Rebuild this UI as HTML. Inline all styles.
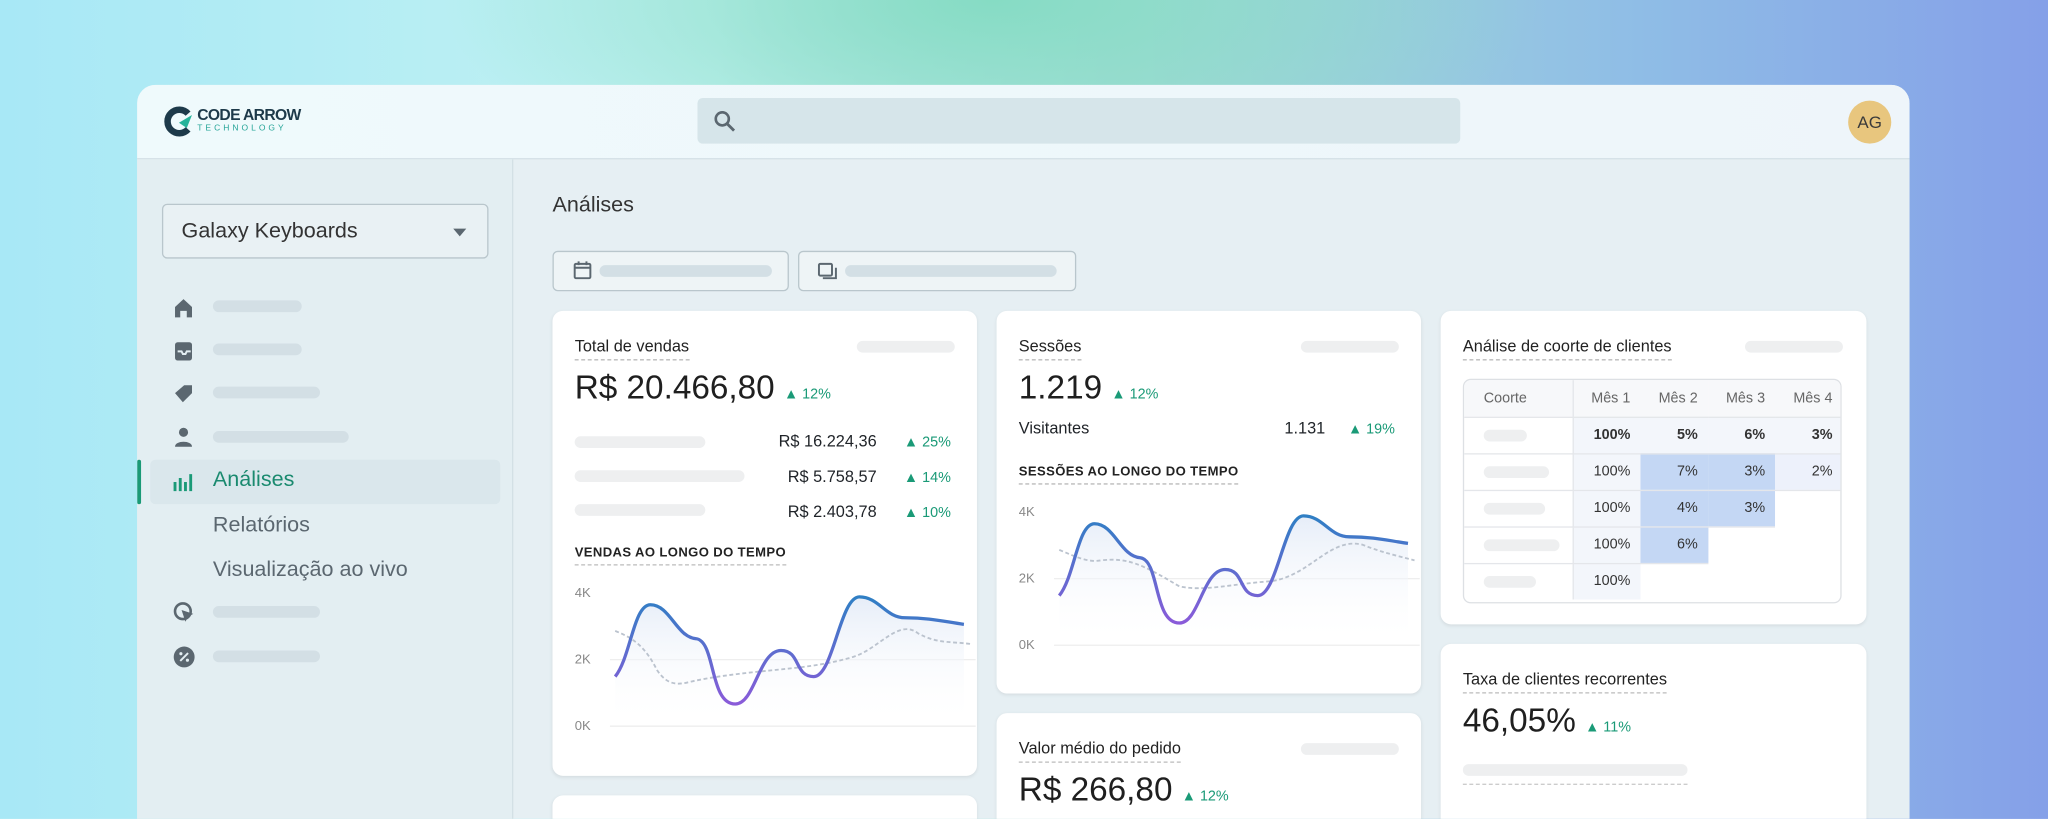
<!DOCTYPE html>
<html><head><meta charset="utf-8"><style>
*{box-sizing:border-box;margin:0;padding:0}
html,body{width:2048px;height:819px;overflow:hidden}
body{font-family:"Liberation Sans",sans-serif;color:#1f2328}
#w{width:1568px;height:627px;transform:scale(1.30612);transform-origin:0 0;position:relative;overflow:hidden;
background:radial-gradient(ellipse 420px 160px at 760px 0,#86dcc4 0%,rgba(134,220,196,0) 100%),linear-gradient(90deg,#a8e8f6 0%,#c2f2f1 35%,#a6dcd8 55%,#8fbde6 80%,#85a0e8 100%)}
.win{position:absolute;left:105px;top:65px;width:1357px;height:562px;border-radius:14px 14px 0 0;overflow:hidden;background:#e6eff3}
.hdr{position:absolute;left:0;top:0;right:0;height:57px;background:linear-gradient(90deg,#effafc,#eef5fa);border-bottom:1px solid #d5e2e7}
.side{position:absolute;left:0;top:57px;width:288px;bottom:0;background:#e3eef2;border-right:1px solid #d3e0e5}
.abs{position:absolute}
.bar{position:absolute;height:9px;border-radius:5px;background:#d3dfe5}
.card{position:absolute;background:#fff;border-radius:8px;box-shadow:0 1px 3px rgba(0,0,0,.08)}
.t{position:absolute;font-size:12.5px;color:#222;border-bottom:1px dashed #bbb;padding-bottom:3px}
.g{color:#1a9a77;font-size:11px}
.gb{position:absolute;height:9px;border-radius:5px;background:#eeeff0}
.big{position:absolute;font-size:25.5px;color:#1f1f1f}
.lab{position:absolute;font-size:10px;color:#888}
table{border-collapse:collapse;font-size:11px}
td{height:28px;text-align:right;padding-right:8px;color:#333;border-bottom:1px solid #e4e6ea}
td:first-child{padding-left:15px;text-align:left}
</style></head><body><div id="w">
<div class="win">
<div class="hdr">
 <svg class="abs" style="left:20px;top:16px" width="24" height="24" viewBox="0 0 24 24"><path d="M19 6A9 9 0 1 0 19 18" fill="none" stroke="#1d3a4a" stroke-width="5"/><path d="M12 13l10-6-4 10z" fill="#26b39a"/></svg>
 <div class="abs" style="left:46px;top:16px;font-size:12px;font-weight:bold;color:#1d3a4a;letter-spacing:-.5px">CODE ARROW</div>
 <div class="abs" style="left:46px;top:30px;font-size:6.5px;color:#26a598;letter-spacing:2.3px">TECHNOLOGY</div>
 <div class="abs" style="left:429px;top:10px;width:584px;height:35px;border-radius:4px;background:#d6e5ea"></div>
 <svg class="abs" style="left:441px;top:19px" width="18" height="18" viewBox="0 0 18 18"><circle cx="7" cy="7" r="5" fill="none" stroke="#5b6770" stroke-width="2"/><path d="M11 11l5 5" stroke="#5b6770" stroke-width="2.2"/></svg>
 <div class="abs" style="left:1310px;top:12px;width:33px;height:33px;border-radius:50%;background:#e8c67e;font-size:13px;color:#3b3b3b;text-align:center;line-height:33px">AG</div>
</div>
<div class="side">
 <div class="abs" style="left:19px;top:34px;width:250px;height:42px;border:1px solid #b9c6cc;border-radius:4px;background:#e9f1f4;font-size:16.5px;color:#333;padding:11px 14px">Galaxy Keyboards</div>
 <div class="abs" style="left:242px;top:53px;border-left:5px solid transparent;border-right:5px solid transparent;border-top:6px solid #5b6770"></div>
 <svg class="abs" style="left:27px;top:105px" width="17" height="17"><path d="M2 8L8.5 2 15 8v8h-4v-5H6v5H2z" fill="#5b6770"/></svg>
 <div class="bar" style="left:58px;top:108px;width:68px"></div>
 <svg class="abs" style="left:27px;top:138px" width="17" height="17"><rect x="2" y="2" width="13" height="14" rx="2" fill="#5b6770"/><path d="M4 9h3l1 2h2l1-2h3" stroke="#e3eef2" stroke-width="1.5" fill="none"/></svg>
 <div class="bar" style="left:58px;top:141px;width:68px"></div>
 <svg class="abs" style="left:27px;top:171px" width="17" height="17"><path d="M2 8l7-6h6v6l-7 7z" fill="#5b6770"/></svg>
 <div class="bar" style="left:58px;top:174px;width:82px"></div>
 <svg class="abs" style="left:27px;top:204px" width="17" height="17"><circle cx="8.5" cy="5" r="3.5" fill="#5b6770"/><path d="M2 16c0-5 13-5 13 0z" fill="#5b6770"/></svg>
 <div class="bar" style="left:58px;top:208px;width:104px"></div>
 <div class="abs" style="left:10px;top:230px;width:268px;height:34px;border-radius:4px;background:#dae7ec"></div>
 <div class="abs" style="left:0;top:230px;width:3px;height:34px;background:#1a9a77;border-radius:2px"></div>
 <svg class="abs" style="left:27px;top:238px" width="18" height="18"><path d="M2 9v7M6 6v10M10 9v7M14 3v13" stroke="#1a9a77" stroke-width="2.2"/></svg>
 <div class="abs" style="left:58px;top:236px;font-size:16.5px;color:#1a8a6f">Análises</div>
 <div class="abs" style="left:58px;top:271px;font-size:16.5px;color:#5b6770">Relatórios</div>
 <div class="abs" style="left:58px;top:305px;font-size:16.5px;color:#5b6770">Visualização ao vivo</div>
 <svg class="abs" style="left:27px;top:338px" width="18" height="18"><circle cx="8" cy="8" r="6" fill="none" stroke="#5b6770" stroke-width="2"/><path d="M7 7l9 3-4 2-2 4z" fill="#5b6770"/></svg>
 <div class="bar" style="left:58px;top:342px;width:82px"></div>
 <svg class="abs" style="left:27px;top:372px" width="18" height="18"><circle cx="9" cy="9" r="8" fill="#5b6770"/><path d="M6 12l6-6" stroke="#e3eef2" stroke-width="1.5"/><circle cx="6.5" cy="6.5" r="1.2" fill="#e3eef2"/><circle cx="11.5" cy="11.5" r="1.2" fill="#e3eef2"/></svg>
 <div class="bar" style="left:58px;top:376px;width:82px"></div>
</div>
<div class="abs" style="left:318px;top:83px;font-size:16.5px;color:#333">Análises</div>
<div class="abs" style="left:318px;top:127px;width:181px;height:31px;border:1px solid #b9c6cc;border-radius:4px;background:#eef4f6"></div>
<svg class="abs" style="left:334px;top:135px" width="14" height="14"><rect x="1" y="2" width="12" height="11" rx="1" fill="none" stroke="#5b6770" stroke-width="1.5"/><path d="M1 5h12M4 0v3M10 0v3" stroke="#5b6770" stroke-width="1.5"/></svg>
<div class="bar" style="left:354px;top:138px;width:132px"></div>
<div class="abs" style="left:506px;top:127px;width:213px;height:31px;border:1px solid #b9c6cc;border-radius:4px;background:#eef4f6"></div>
<svg class="abs" style="left:521px;top:135px" width="15" height="14"><rect x="1" y="2" width="10" height="9" rx="1" fill="none" stroke="#5b6770" stroke-width="1.5"/><path d="M4 13h10V5" stroke="#5b6770" stroke-width="1.5" fill="none"/></svg>
<div class="bar" style="left:542px;top:138px;width:162px"></div>

<svg width="0" height="0" style="position:absolute"><defs>
<linearGradient id="a" gradientUnits="userSpaceOnUse" x1="0" y1="14" x2="0" y2="96"><stop offset="0" stop-color="#2f7fc4"/><stop offset="1" stop-color="#8a5bd9"/></linearGradient>
<linearGradient id="f" x1="0" y1="0" x2="0" y2="1"><stop offset="0" stop-color="#e6edf8"/><stop offset="1" stop-color="#fff" stop-opacity="0"/></linearGradient></defs></svg>

<!-- card1 -->
<div class="card" style="left:318px;top:173px;width:325px;height:356px">
 <div class="t" style="left:17px;top:20px">Total de vendas</div>
 <div class="gb" style="left:233px;top:23px;width:75px"></div>
 <div class="big" style="left:17px;top:45px">R$ 20.466,80 <span class="g">▲ 12%</span></div>
 <div class="gb" style="left:17px;top:96px;width:100px"></div>
 <div class="gb" style="left:17px;top:122px;width:130px"></div>
 <div class="gb" style="left:17px;top:148px;width:100px"></div>
 <div class="abs" style="right:20px;top:87px;font-size:12.5px;text-align:right;line-height:26px">R$ 16.224,36 &nbsp;&nbsp;&nbsp;&nbsp;&nbsp;<span class="g">▲ 25%</span><br>R$ 5.758,57 &nbsp;&nbsp;&nbsp;&nbsp;&nbsp;<span class="g">▲ 14%</span><br>R$ 2.403,78 &nbsp;&nbsp;&nbsp;&nbsp;&nbsp;<span class="g">▲ 10%</span></div>
 <div class="t" style="left:17px;top:180px;font-size:10px;font-weight:bold;letter-spacing:.3px">VENDAS AO LONGO DO TEMPO</div>
 <div class="lab" style="left:17px;top:211px">4K</div><div class="lab" style="left:17px;top:262px">2K</div><div class="lab" style="left:17px;top:313px">0K</div>
 <svg class="abs" style="left:40px;top:205px" width="285" height="120"><path d="M4 62h280M4 113h280" stroke="#eee"/>
 <path d="M8 75C20 60 22 20 35 20 50 20 55 45 70 46 85 48 80 96 100 96 115 96 118 55 135 55 150 55 145 75 160 75 175 75 180 14 195 14 210 14 215 30 230 30 250 30 260 33 275 35V113H8z" fill="url(#f)"/>
 <path d="M8 40C20 45 30 50 40 70 50 85 60 80 70 78 90 74 110 72 130 70 150 68 170 66 190 60 210 54 225 30 240 42 255 50 265 48 280 50" fill="none" stroke="#bbc3ce" stroke-width="1.4" stroke-dasharray="3 2"/>
 <path d="M8 75C20 60 22 20 35 20 50 20 55 45 70 46 85 48 80 96 100 96 115 96 118 55 135 55 150 55 145 75 160 75 175 75 180 14 195 14 210 14 215 30 230 30 250 30 260 33 275 35" fill="none" stroke="url(#a)" stroke-width="2.5"/></svg>
</div>
<div class="card" style="left:318px;top:544px;width:325px;height:80px"></div>

<!-- card2 -->
<div class="card" style="left:658px;top:173px;width:325px;height:293px">
 <div class="t" style="left:17px;top:20px">Sessões</div>
 <div class="gb" style="left:233px;top:23px;width:75px"></div>
 <div class="big" style="left:17px;top:45px">1.219 <span class="g">▲ 12%</span></div>
 <div class="abs" style="left:17px;top:83px;font-size:12.5px">Visitantes</div>
 <div class="abs" style="right:20px;top:83px;font-size:12.5px">1.131 &nbsp;&nbsp;&nbsp;&nbsp;<span class="g">▲ 19%</span></div>
 <div class="t" style="left:17px;top:118px;font-size:10px;font-weight:bold;letter-spacing:.3px">SESSÕES AO LONGO DO TEMPO</div>
 <div class="lab" style="left:17px;top:149px">4K</div><div class="lab" style="left:17px;top:200px">2K</div><div class="lab" style="left:17px;top:251px">0K</div>
 <svg class="abs" style="left:40px;top:143px" width="285" height="120"><path d="M4 62h280M4 113h280" stroke="#eee"/>
 <path d="M8 75C20 60 22 20 35 20 50 20 55 45 70 46 85 48 80 96 100 96 115 96 118 55 135 55 150 55 145 75 160 75 175 75 180 14 195 14 210 14 215 30 230 30 250 30 260 33 275 35V113H8z" fill="url(#f)"/>
 <path d="M8 40C20 45 30 50 40 48 60 46 70 50 100 68 120 72 140 66 170 64 200 60 215 30 240 36 255 42 265 44 280 48" fill="none" stroke="#bbc3ce" stroke-width="1.4" stroke-dasharray="3 2"/>
 <path d="M8 75C20 60 22 20 35 20 50 20 55 45 70 46 85 48 80 96 100 96 115 96 118 55 135 55 150 55 145 75 160 75 175 75 180 14 195 14 210 14 215 30 230 30 250 30 260 33 275 35" fill="none" stroke="url(#a)" stroke-width="2.5"/></svg>
</div>
<div class="card" style="left:658px;top:481px;width:325px;height:140px">
 <div class="t" style="left:17px;top:20px">Valor médio do pedido</div>
 <div class="gb" style="left:233px;top:23px;width:75px"></div>
 <div class="big" style="left:17px;top:45px">R$ 266,80 <span class="g">▲ 12%</span></div>
</div>

<!-- card3 -->
<div class="card" style="left:998px;top:173px;width:326px;height:240px">
 <div class="t" style="left:17px;top:20px">Análise de coorte de clientes</div>
 <div class="gb" style="left:233px;top:23px;width:75px"></div>
 <div class="abs" style="left:17px;top:52px;width:290px;height:172px;border:1px solid #dde0e4;border-radius:6px;overflow:hidden">
 <table style="width:290px">
 <tr style="background:#f7f8fa"><td style="color:#666;width:83px;border-right:1px solid #e4e6ea">Coorte</td><td style="color:#666">Mês 1</td><td style="color:#666">Mês 2</td><td style="color:#666">Mês 3</td><td style="color:#666">Mês 4</td></tr>
 <tr><td style="border-right:1px solid #e4e6ea"><div class="gb" style="position:static;width:33px"></div></td><td style="font-weight:bold;background:#f3f6fb">100%</td><td style="font-weight:bold;background:#f3f6fb">5%</td><td style="font-weight:bold;background:#f3f6fb">6%</td><td style="font-weight:bold;background:#f3f6fb">3%</td></tr>
 <tr><td style="border-right:1px solid #e4e6ea"><div class="gb" style="position:static;width:50px"></div></td><td style="background:#f3f6fb">100%</td><td style="background:#c4d7f4">7%</td><td style="background:#c4d7f4">3%</td><td style="background:#edf1fb">2%</td></tr>
 <tr><td style="border-right:1px solid #e4e6ea"><div class="gb" style="position:static;width:47px"></div></td><td style="background:#f3f6fb">100%</td><td style="background:#c4d7f4">4%</td><td style="background:#c4d7f4">3%</td><td style="border:0"></td></tr>
 <tr><td style="border-right:1px solid #e4e6ea"><div class="gb" style="position:static;width:58px"></div></td><td style="background:#f3f6fb">100%</td><td style="background:#c4d7f4">6%</td><td style="border:0"></td><td style="border:0"></td></tr>
 <tr><td style="border-right:1px solid #e4e6ea;border-bottom:0"><div class="gb" style="position:static;width:40px"></div></td><td style="background:#f3f6fb;border:0">100%</td><td style="border:0"></td><td style="border:0"></td><td style="border:0"></td></tr>
 </table></div>
</div>
<div class="card" style="left:998px;top:428px;width:326px;height:200px">
 <div class="t" style="left:17px;top:20px">Taxa de clientes recorrentes</div>
 <div class="big" style="left:17px;top:45px">46,05% <span class="g">▲ 11%</span></div>
 <div class="gb" style="left:17px;top:92px;width:172px"></div>
 <div class="abs" style="left:17px;top:107px;width:172px;border-top:1px dashed #ccc"></div>
</div>
</div>
</div></body></html>
